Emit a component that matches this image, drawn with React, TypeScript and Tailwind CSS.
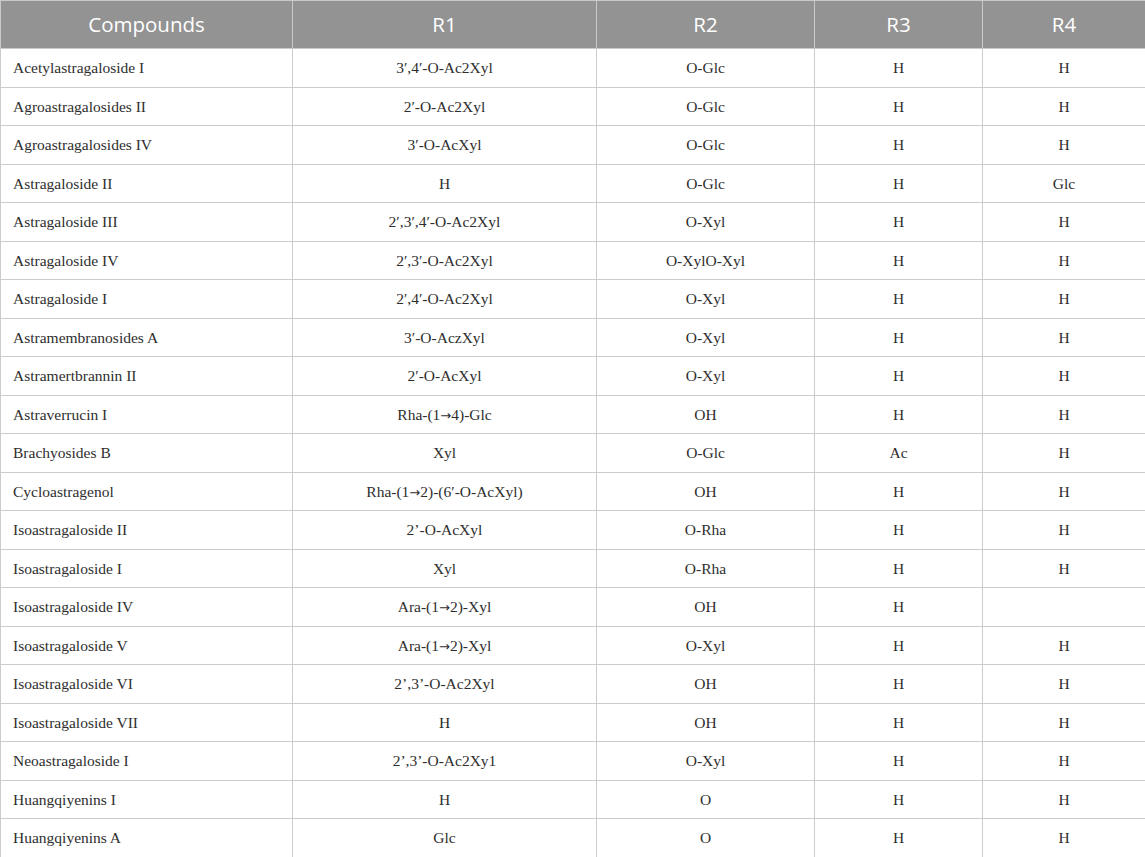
import React from "react";

const A = <span className="font-['DejaVu_Sans',sans-serif] text-[13px]">{"\u2192"}</span>;

const rows: [string, React.ReactNode, string, string, string][] = [
  ["Acetylastragaloside I", "3\u2032,4\u2032-O-Ac2Xyl", "O-Glc", "H", "H"],
  ["Agroastragalosides II", "2\u2032-O-Ac2Xyl", "O-Glc", "H", "H"],
  ["Agroastragalosides IV", "3\u2032-O-AcXyl", "O-Glc", "H", "H"],
  ["Astragaloside II", "H", "O-Glc", "H", "Glc"],
  ["Astragaloside III", "2\u2032,3\u2032,4\u2032-O-Ac2Xyl", "O-Xyl", "H", "H"],
  ["Astragaloside IV", "2\u2032,3\u2032-O-Ac2Xyl", "O-XylO-Xyl", "H", "H"],
  ["Astragaloside I", "2\u2032,4\u2032-O-Ac2Xyl", "O-Xyl", "H", "H"],
  ["Astramembranosides A", "3\u2032-O-AczXyl", "O-Xyl", "H", "H"],
  ["Astramertbrannin II", "2\u2032-O-AcXyl", "O-Xyl", "H", "H"],
  ["Astraverrucin I", <>Rha-(1{A}4)-Glc</>, "OH", "H", "H"],
  ["Brachyosides B", "Xyl", "O-Glc", "Ac", "H"],
  ["Cycloastragenol", <>Rha-(1{A}2)-(6{"\u2032"}-O-AcXyl)</>, "OH", "H", "H"],
  ["Isoastragaloside II", "2\u2019-O-AcXyl", "O-Rha", "H", "H"],
  ["Isoastragaloside I", "Xyl", "O-Rha", "H", "H"],
  ["Isoastragaloside IV", <>Ara-(1{A}2)-Xyl</>, "OH", "H", ""],
  ["Isoastragaloside V", <>Ara-(1{A}2)-Xyl</>, "O-Xyl", "H", "H"],
  ["Isoastragaloside VI", "2\u2019,3\u2019-O-Ac2Xyl", "OH", "H", "H"],
  ["Isoastragaloside VII", "H", "OH", "H", "H"],
  ["Neoastragaloside I", "2\u2019,3\u2019-O-Ac2Xy1", "O-Xyl", "H", "H"],
  ["Huangqiyenins I", "H", "O", "H", "H"],
  ["Huangqiyenins A", "Glc", "O", "H", "H"],
];

const widths = ["w-[292px]", "w-[304px]", "w-[218px]", "w-[168px]", "w-[163px]"];
const headers = ["Compounds", "R1", "R2", "R3", "R4"];

export default function App() {
  return (
    <div className="w-[1145px] h-[857px] bg-white overflow-hidden">
      <table className="w-[1145px] table-fixed border-collapse">
        <colgroup>
          {widths.map((w, i) => (
            <col key={i} className={w} />
          ))}
        </colgroup>
        <thead>
          <tr className="h-[48px] bg-[#939393]">
            {headers.map((h) => (
              <th
                key={h}
                className="border border-[#c9c9c9] text-center font-normal text-white text-[20.5px] font-['Open_Sans',sans-serif] p-0"
              >
                {h}
              </th>
            ))}
          </tr>
        </thead>
        <tbody>
          {rows.map((r, i) => (
            <tr key={i} className="h-[38.5px]">
              {r.map((c, j) => (
                <td
                  key={j}
                  className={`border border-[#cccccc] text-[#2e2e2e] text-[15.5px] font-['Liberation_Serif',serif] p-0 ${
                    j === 0 ? "text-left pl-[12px]" : "text-center"
                  }`}
                >
                  {c}
                </td>
              ))}
            </tr>
          ))}
        </tbody>
      </table>
    </div>
  );
}
